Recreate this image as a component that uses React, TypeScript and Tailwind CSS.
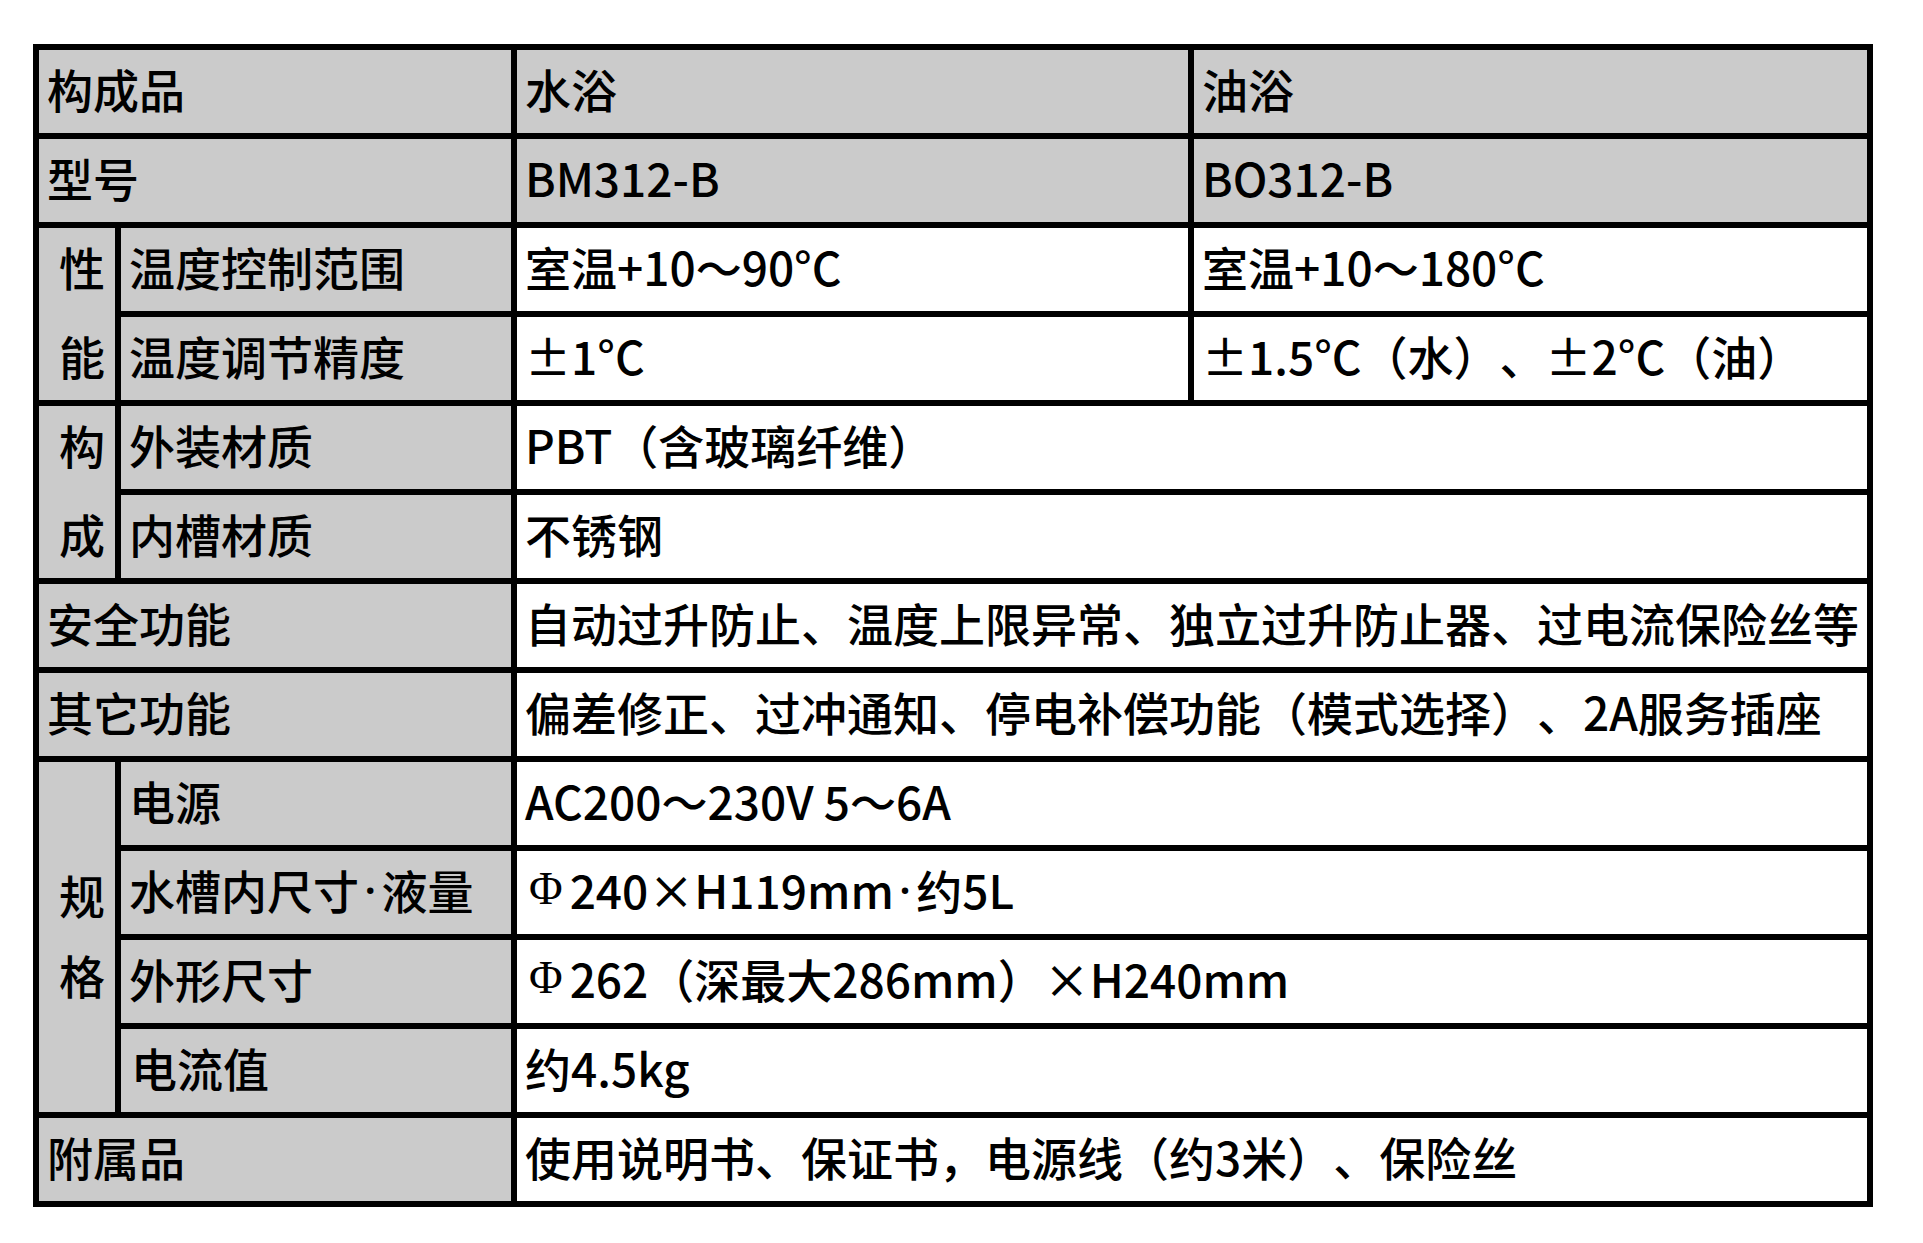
import React from "react";

const G = "bg-[#cbcbcb]";
const W = "bg-white";

function Cell({
  children,
  className = "",
}: {
  children?: React.ReactNode;
  className?: string;
}) {
  return (
    <div
      className={`flex items-center whitespace-nowrap pl-[8px] pb-[8px] text-black ${className}`}
    >
      {children}
    </div>
  );
}

function Phi() {
  return (
    <span className="font-['Liberation_Serif',serif] font-normal mr-[7px] ml-[4px]">Φ</span>
  );
}

function Dot() {
  return <span className="font-['Noto_Sans','Liberation_Sans',sans-serif] mx-[5px]">·</span>;
}

export default function App() {
  return (
    <div className="min-h-[1243px] w-[1923px] bg-white pt-[44px] pl-[33px]">
      <div className="grid w-[1840px] grid-cols-[76px_390px_671px_673px] grid-rows-[repeat(13,83px)] gap-[6px] bg-black p-[6px] font-['Noto_Sans_CJK_SC','Noto_Sans',sans-serif] text-[46px] font-medium leading-none [text-spacing-trim:space-all]">
        {/* row 1 */}
        <Cell className={`${G} col-span-2`}>构成品</Cell>
        <Cell className={G}>水浴</Cell>
        <Cell className={G}>油浴</Cell>
        {/* row 2 */}
        <Cell className={`${G} col-span-2`}>型号</Cell>
        <Cell className={G}>BM312-B</Cell>
        <Cell className={G}>BO312-B</Cell>
        {/* 性能 */}
        <div className={`${G} row-span-2 flex flex-col items-start justify-center pl-[20px] pb-[7px] leading-[89px]`}>
          <span>性</span>
          <span>能</span>
        </div>
        <Cell className={G}>温度控制范围</Cell>
        <Cell className={W}>室温+10～90°C</Cell>
        <Cell className={W}>室温+10～180°C</Cell>
        <Cell className={G}>温度调节精度</Cell>
        <Cell className={W}>±1°C</Cell>
        <Cell className={W}>±1.5°C（水）、±2°C（油）</Cell>
        {/* 构成 */}
        <div className={`${G} row-span-2 flex flex-col items-start justify-center pl-[20px] pb-[7px] leading-[89px]`}>
          <span>构</span>
          <span>成</span>
        </div>
        <Cell className={G}>外装材质</Cell>
        <Cell className={`${W} col-span-2`}>PBT（含玻璃纤维）</Cell>
        <Cell className={G}>内槽材质</Cell>
        <Cell className={`${W} col-span-2`}>不锈钢</Cell>
        {/* 安全功能 */}
        <Cell className={`${G} col-span-2`}>安全功能</Cell>
        <Cell className={`${W} col-span-2`}>
          自动过升防止、温度上限异常、独立过升防止器、过电流保险丝等
        </Cell>
        {/* 其它功能 */}
        <Cell className={`${G} col-span-2`}>其它功能</Cell>
        <Cell className={`${W} col-span-2`}>
          偏差修正、过冲通知、停电补偿功能（模式选择）、2A服务插座
        </Cell>
        {/* 规格 */}
        <div className={`${G} row-span-4 flex flex-col items-start justify-center pl-[20px] pb-[7px] leading-[80px]`}>
          <span>规</span>
          <span>格</span>
        </div>
        <Cell className={G}>电源</Cell>
        <Cell className={`${W} col-span-2`}>AC200～230V 5～6A</Cell>
        <Cell className={G}>
          水槽内尺寸
          <Dot />
          液量
        </Cell>
        <Cell className={`${W} col-span-2`}>
          <Phi />
          240×H119mm
          <Dot />
          约5L
        </Cell>
        <Cell className={G}>外形尺寸</Cell>
        <Cell className={`${W} col-span-2`}>
          <Phi />
          262（深最大286mm）×H240mm
        </Cell>
        <Cell className={G}>
          <span className="pl-[2px]">电流值</span>
        </Cell>
        <Cell className={`${W} col-span-2`}>约4.5kg</Cell>
        {/* 附属品 */}
        <Cell className={`${G} col-span-2`}>附属品</Cell>
        <Cell className={`${W} col-span-2`}>使用说明书、保证书，电源线（约3米）、保险丝</Cell>
      </div>
    </div>
  );
}
